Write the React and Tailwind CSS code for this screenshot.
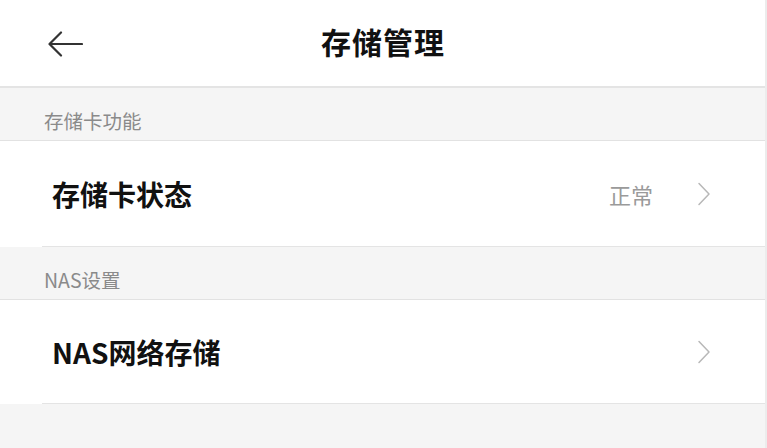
import React from "react";

const font = { fontFamily: '"Noto Sans CJK SC", "Noto Sans", sans-serif' };

function Chevron() {
  return (
    <svg width="14" height="24" viewBox="0 0 14 24" fill="none">
      <path d="M2 1.5 L12 12 L2 22.5" stroke="#b8b8b8" strokeWidth="1.5" strokeLinecap="round" strokeLinejoin="round" />
    </svg>
  );
}

function SectionLabel({ children }) {
  return (
    <div className="h-[53px] bg-[#f5f5f5] border-b border-[#e2e2e2] flex items-end pl-[44px] pb-[7px]">
      <span className="text-[19.5px] leading-[24px] text-[#8a8a8a]">{children}</span>
    </div>
  );
}

function Row({ title, value, tall }) {
  return (
    <div className="bg-white">
      <div className={(tall ? "h-[105px]" : "h-[103px]") + " flex items-center pl-[52px] pr-[54px]"}>
        <span className="text-[28px] font-bold text-[#111] leading-none">{title}</span>
        <div className="ml-auto flex items-center gap-[44px]">
          {value && <span className="text-[22px] text-[#9a9a9a] leading-none">{value}</span>}
          <Chevron />
        </div>
      </div>
      <div className="h-px ml-[42px] bg-[#e4e4e4]" />
    </div>
  );
}

export default function App() {
  return (
    <div className="w-[767px] h-[448px] flex overflow-hidden" style={font}>
      <div className="w-[765px] h-full bg-[#f5f5f5] flex flex-col">
        <div className="h-[88px] bg-white border-b-2 border-[#e4e4e4] flex items-center relative">
          <div className="pl-[47px] pt-[4px]">
            <svg width="36" height="28" viewBox="0 0 36 28" fill="none">
              <path d="M35 13 H3 M14 1.5 L2.5 13 L14 24.5" stroke="#333" strokeWidth="2.2" strokeLinecap="round" strokeLinejoin="round" />
            </svg>
          </div>
          <div className="absolute left-0 right-0 top-0 bottom-0 flex items-center justify-center pointer-events-none">
            <span className="text-[30px] font-bold text-[#111] tracking-[1px] leading-none ml-[1px] pb-[4px]">存储管理</span>
          </div>
        </div>
        <SectionLabel>存储卡功能</SectionLabel>
        <Row title="存储卡状态" value="正常" tall />
        <SectionLabel>NAS设置</SectionLabel>
        <Row title="NAS网络存储" />
      </div>
      <div className="w-[2px] h-full bg-[#ececec]" />
    </div>
  );
}
